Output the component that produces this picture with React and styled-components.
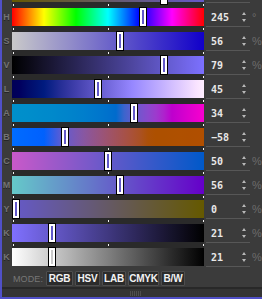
import React from 'react';
import styled, { createGlobalStyle } from 'styled-components';

const Global = createGlobalStyle`
  html, body { margin: 0; padding: 0; background: #3b3b3b; }
  body { width: 262px; height: 299px; overflow: hidden; }
`;

const clamp01 = (v) => Math.min(1, Math.max(0, v));
const css = ([r, g, b]) => `rgb(${Math.round(r)},${Math.round(g)},${Math.round(b)})`;

function hsv(h, s, v) {
  const c = v * s;
  const hp = (h % 360) / 60;
  const x = c * (1 - Math.abs((hp % 2) - 1));
  let r = 0, g = 0, b = 0;
  if (hp < 1) [r, g, b] = [c, x, 0];
  else if (hp < 2) [r, g, b] = [x, c, 0];
  else if (hp < 3) [r, g, b] = [0, c, x];
  else if (hp < 4) [r, g, b] = [0, x, c];
  else if (hp < 5) [r, g, b] = [x, 0, c];
  else [r, g, b] = [c, 0, x];
  const m = v - c;
  return [(r + m) * 255, (g + m) * 255, (b + m) * 255];
}

function lab(L, a, bb) {
  const fy = (L + 16) / 116;
  const fx = fy + a / 500;
  const fz = fy - bb / 200;
  const inv = (t) => (t ** 3 > 0.008856 ? t ** 3 : (t - 16 / 116) / 7.787);
  const X = 0.95047 * inv(fx);
  const Y = inv(fy);
  const Z = 1.08883 * inv(fz);
  const lin = [
    3.2406 * X - 1.5372 * Y - 0.4986 * Z,
    -0.9689 * X + 1.8758 * Y + 0.0415 * Z,
    0.0557 * X - 0.204 * Y + 1.057 * Z,
  ];
  return lin.map((c) => {
    const v = clamp01(c);
    const g = v > 0.0031308 ? 1.055 * v ** (1 / 2.4) - 0.055 : 12.92 * v;
    return clamp01(g) * 255;
  });
}

const cmyk = (c, m, y, k) => [255 * (1 - c) * (1 - k), 255 * (1 - m) * (1 - k), 255 * (1 - y) * (1 - k)];

const stops = (fn, n = 24) =>
  Array.from({ length: n + 1 }, (_, i) => `${css(fn(i / n))} ${((i / n) * 100).toFixed(2)}%`).join(', ');

const FILL = '#6158c9';

const rows = [
  { l: 'H', v: '245', u: '°', f: 245 / 360, g: (t) => hsv(t * 359.999, 1, 1) },
  { l: 'S', v: '56', u: '%', f: 0.56, g: (t) => hsv(245, t, 0.79) },
  { l: 'V', v: '79', u: '%', f: 0.79, g: (t) => hsv(245, 0.56, t) },
  { l: 'L', v: '45', u: '', f: 0.45, g: (t) => lab(t * 100, 34, -58) },
  { l: 'A', v: '34', u: '', f: 162 / 255, g: (t) => lab(45, -128 + 255 * t, -58) },
  { l: 'B', v: '−58', u: '', f: 70 / 255, g: (t) => lab(45, 34, -128 + 255 * t) },
  { l: 'C', v: '50', u: '%', f: 0.5, g: (t) => cmyk(t, 0.56, 0, 0.21) },
  { l: 'M', v: '56', u: '%', f: 0.56, g: (t) => cmyk(0.5, t, 0, 0.21) },
  { l: 'Y', v: '0', u: '%', f: 0, g: (t) => cmyk(0.5, 0.56, t, 0.21) },
  { l: 'K', v: '21', u: '%', f: 0.21, g: (t) => cmyk(0.5, 0.56, 0, t) },
  { l: 'K', v: '21', u: '%', f: 0.21, g: (t) => [255 * (1 - t), 255 * (1 - t), 255 * (1 - t)], fill: '#c9c9c9' },
];

const Frame = styled.div`
  width: 262px;
  height: 299px;
  box-sizing: border-box;
  border-left: 2px solid #5050c8;
  border-bottom: 2px solid #5050c8;
  background: #3b3b3b;
  display: flex;
  flex-direction: column;
  font-family: "Liberation Sans", Arial, sans-serif;
  overflow: hidden;
`;

const Row = styled.div`
  display: grid;
  grid-template-columns: 10px 192px 2px 44px 1fr;
  height: ${(p) => p.$h}px;
  flex: none;
`;

const Letter = styled.div`
  grid-column: 1;
  align-self: end;
  height: 18px;
  display: flex;
  align-items: center;
  justify-content: center;
  padding-right: 1px;
  font-size: 9px;
  font-weight: bold;
  color: #747474;
  text-shadow: 0 1px 0 #262626;
`;

const Track = styled.div`
  grid-column: 2;
  background: #2a2a2a;
  display: flex;
  flex-direction: column;
  justify-content: flex-end;
`;

const Ticks = styled.div`
  height: 6px;
  display: flex;
  justify-content: space-between;
  align-items: center;
  padding-left: 1px;
`;

const Tick = styled.span`
  width: 1px;
  height: 2px;
  background: #f2f2f2;
`;

const Bar = styled.div`
  position: relative;
  height: ${(p) => p.$h}px;
  background: linear-gradient(to right, ${(p) => p.$stops});
`;

const Handle = styled.div`
  position: absolute;
  top: 0;
  bottom: 0;
  width: 6px;
  box-sizing: border-box;
  border: 2px solid #fff;
  box-shadow: 0 0 0 1px #000;
  background: ${(p) => p.$fill};
`;

const Field = styled.div`
  grid-column: 4;
  align-self: end;
  height: ${(p) => p.$h}px;
  margin-bottom: -1px;
  box-sizing: border-box;
  border-bottom: 1px solid #575757;
  display: flex;
  align-items: center;
`;

const Value = styled.span`
  flex: 1;
  padding-left: 5px;
  font-family: "DejaVu Sans Mono", "Liberation Mono", monospace;
  font-weight: bold;
  font-size: 10px;
  color: #e8e8e8;
  white-space: nowrap;
`;

const Spinner = styled.div`
  width: 5px;
  margin-right: 4px;
  display: flex;
  flex-direction: column;
  align-items: center;
  gap: 4px;
  padding-bottom: 1px;
`;

const Arrow = styled.span`
  width: 0;
  height: 0;
  border-left: 2.5px solid transparent;
  border-right: 2.5px solid transparent;
  ${(p) => (p.$up ? 'border-bottom: 3px solid #b8b8b8;' : 'border-top: 3px solid #b8b8b8;')}
`;

const Unit = styled.div`
  grid-column: 5;
  align-self: end;
  height: 18px;
  display: flex;
  align-items: center;
  padding-left: 2px;
  font-size: 11px;
  color: #6c6c6c;
`;

const ModeRow = styled.div`
  display: flex;
  align-items: center;
  gap: 2px;
  height: 21px;
  box-sizing: border-box;
  padding: 5px 0 1px 11px;
  flex: none;
`;

const ModeLabel = styled.span`
  font-size: 9px;
  color: #777;
  margin-right: 1px;
  letter-spacing: 0.1px;
`;

const ModeButton = styled.div`
  width: ${(p) => p.$w}px;
  height: 15px;
  box-sizing: border-box;
  border: 1px solid #4e4e4e;
  border-radius: 1px;
  background: #2b2b2b;
  color: #f2f2f2;
  font-size: 10px;
  font-weight: bold;
  display: flex;
  align-items: center;
  justify-content: center;
  letter-spacing: -0.2px;
`;

const StatusBar = styled.div`
  flex: 1;
  border-top: 2px solid #282828;
  background: #343434;
  display: flex;
  align-items: center;
  padding-left: 128px;
`;

const Grip = styled.div`
  width: 12px;
  height: 5px;
  background: repeating-linear-gradient(90deg, #4e4e4e 0 1px, transparent 1px 2px);
`;

const handleLeft = (f) => Math.min(186, Math.max(1, f * 192 - 3));

function Slider({ row }) {
  const fill = row.fill || FILL;
  return (
    <Row $h={24}>
      <Letter>{row.l}</Letter>
      <Track>
        <Ticks>
          <Tick />
          <Tick />
          <Tick />
        </Ticks>
        <Bar $h={18} $stops={stops(row.g)}>
          <Handle $fill={fill} style={{ left: handleLeft(row.f) }} />
        </Bar>
      </Track>
      <Field $h={19}>
        <Value>{row.v}</Value>
        <Spinner>
          <Arrow $up />
          <Arrow />
        </Spinner>
      </Field>
      <Unit>{row.u}</Unit>
    </Row>
  );
}

export default function App() {
  const modes = [
    ['RGB', 27],
    ['HSV', 25],
    ['LAB', 24],
    ['CMYK', 31],
    ['B/W', 24],
  ];
  return (
    <>
      <Global />
      <Frame>
        <Row $h={2}>
          <Track>
            <Bar $h={2} $stops={stops((t) => cmyk(0.5, 0.56, 1 - t, 0.21))}>
              <Handle $fill={FILL} style={{ left: handleLeft(0.79) }} />
            </Bar>
          </Track>
          <Field $h={3} />
        </Row>
        {rows.map((r, i) => (
          <Slider key={i} row={r} />
        ))}
        <ModeRow>
          <ModeLabel>MODE:</ModeLabel>
          {modes.map(([m, w]) => (
            <ModeButton key={m} $w={w}>
              {m}
            </ModeButton>
          ))}
        </ModeRow>
        <StatusBar>
          <Grip />
        </StatusBar>
      </Frame>
    </>
  );
}
